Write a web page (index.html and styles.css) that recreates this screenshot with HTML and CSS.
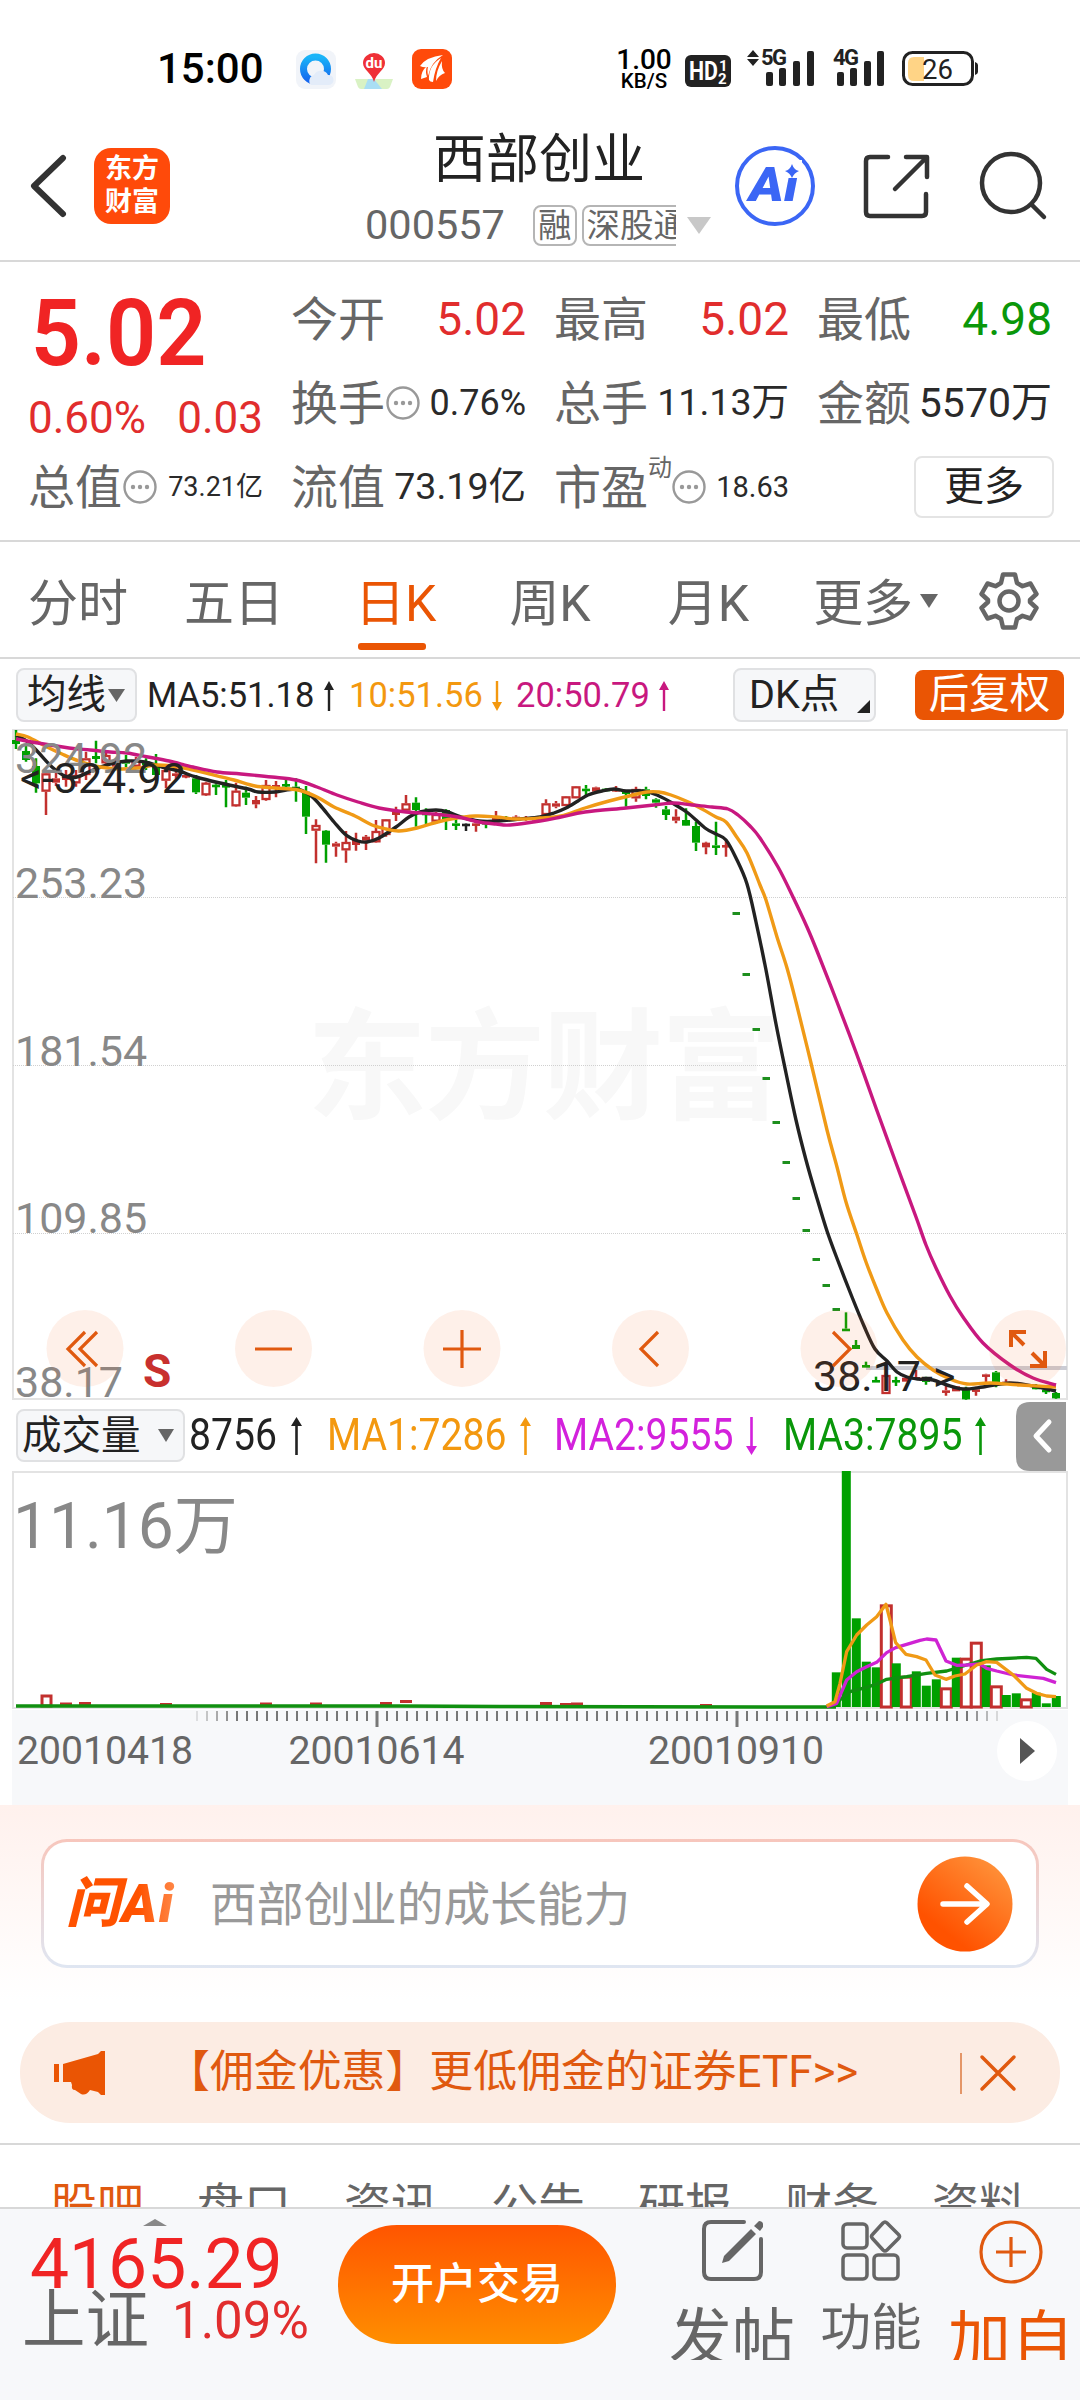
FILE: index.html
```html
<!DOCTYPE html>
<html lang="zh-CN">
<head>
<meta charset="utf-8">
<title>西部创业 000557</title>
<link rel="stylesheet" href="styles.css">
</head>
<body>
<div class="status">
  <span class="clock">15:00</span>
  <svg class="app-icons" width="160" height="42" viewBox="294 48 160 42">
    <defs>
      <linearGradient id="qb" x1="0" y1="0" x2="0" y2="1"><stop offset="0" stop-color="#19b4f8"/><stop offset="1" stop-color="#1667ee"/></linearGradient>
    </defs>
    <rect x="296" y="50" width="40" height="39" rx="9" fill="#f1f4f9"/>
    <circle cx="315.500" cy="69" r="12" fill="none" stroke="url(#qb)" stroke-width="7"/>
    <path d="M311 85a6 6 0 0 1 3-10a8 8 0 0 1 14 0a5 5 0 0 1 1 10z" fill="#e3ecf9"/>
    <path d="M355 79h38l-3 8q-1 2-3 2h-26q-2 0-3-2z" fill="#d9f2c4"/>
    <path d="M368 79l6 0 8 10h-18z" fill="#a9def4"/>
    <path d="M374 82c-2-9-11-12-11-19a11 10 0 0 1 22 0c0 7-9 10-11 19z" fill="#ef3037"/>
    <text x="374" y="68" text-anchor="middle" class="du">du</text>
    <rect x="412" y="49" width="40" height="40" rx="9" fill="#ff4a0a"/>
    <g fill="#fff"><path d="M420 66q6-9 23-11q-12 7-15 21q-1-6 0-9q-4 1-8-1z"/><path d="M421 79q0-8 6-13q-2 6 0 11z"/><path d="M429 80q-1-14 12-22q-6 10-8 24q-3 0-4-2z"/><path d="M436 81q0-10 6-20q-1 8 3 12q-6 2-9 8z"/></g>
  </svg>
  <span class="speed"><b>1.00</b><i>KB/S</i></span>
  <svg class="signals" width="296" height="42" viewBox="684 48 296 42">
    <rect x="685" y="55" width="46" height="32" rx="6" fill="#222"/>
    <text x="689" y="80" class="hd" textLength="29" lengthAdjust="spacingAndGlyphs">HD</text>
    <text x="719" y="71" class="hd-n">1</text>
    <text x="718" y="84" class="hd-n">2</text>
    <path d="M753 50l6 7h-12zM753 66l6-7h-12z" fill="#222"/>
    <text x="761" y="65" class="net">5G</text>
    <g fill="#222"><rect x="766" y="72" width="7" height="14" rx="2"/><rect x="779" y="68" width="7" height="18" rx="2"/><rect x="793" y="61" width="7" height="25" rx="2"/><rect x="807" y="51" width="7" height="35" rx="2"/></g>
    <text x="833" y="65" class="net">4G</text>
    <g fill="#222"><rect x="837" y="72" width="7" height="14" rx="2"/><rect x="850" y="68" width="7" height="18" rx="2"/><rect x="864" y="61" width="7" height="25" rx="2"/><rect x="877" y="51" width="7" height="35" rx="2"/></g>
    <rect x="903.500" y="52.500" width="69" height="32" rx="9" fill="#fff" stroke="#222" stroke-width="3"/>
    <path d="M914 57h10v24h-10q-6 0-6-6v-12q0-6 6-6z" fill="#ffd486"/>
    <path d="M975 62q3 1 3 3v7q0 2-3 3z" fill="#222"/>
    <text x="922" y="78.500" class="bat">26</text>
  </svg>
</div>

<header class="head">
  <svg class="back" width="40" height="64" viewBox="29 154 40 64"><path d="M63 158L34 186L63 214" fill="none" stroke="#333" stroke-width="6" stroke-linecap="round" stroke-linejoin="round"/></svg>
  <div class="logo"><span>东方</span><span>财富</span></div>
  <div class="title">
    <h1>西部创业</h1>
    <div class="sub"><span class="code">000557</span><span class="tag">融</span><span class="tag-clip"><span class="tag">深股通</span></span><svg width="24" height="17" viewBox="0 0 24 17"><path d="M0 0h24L12 17z" fill="#c8c8c8"/></svg></div>
  </div>
  <svg class="ai" width="84" height="84" viewBox="733 144 84 84">
    <circle cx="775" cy="186" r="38" fill="#fff" stroke="#3b66f5" stroke-width="4"/>
    <text x="749" y="201" class="ai-text" textLength="49" lengthAdjust="spacingAndGlyphs">Ai</text>
    <rect x="784" y="160" width="18" height="18" fill="#fff"/>
    <path d="M792 164q2 6 7 7q-5 2-7 7q-2-5-7-7q5-1 7-7z" fill="#3b66f5"/>
  </svg>
  <svg class="share" width="72" height="72" viewBox="860 150 72 72"><g fill="none" stroke="#333" stroke-width="4.500" stroke-linecap="round" stroke-linejoin="round"><path d="M888 157h-18q-4 0-4 4v51q0 4 4 4h52q4 0 4-4v-18"/><path d="M906 157h21v20M926 158L895 189"/></g></svg>
  <svg class="search" width="76" height="76" viewBox="976 148 76 76"><g fill="none" stroke="#333" stroke-width="4.500" stroke-linecap="round"><circle cx="1011" cy="183" r="29"/><path d="M1032 205l12 12"/></g></svg>
</header>

<section class="quote">
  <div class="price"><strong>5.02</strong><div class="chg"><span>0.60%</span><span>0.03</span></div></div>
  <div class="cell"><label>今开</label><b class="up v46">5.02</b></div>
  <div class="cell"><label>最高</label><b class="up v46">5.02</b></div>
  <div class="cell"><label>最低</label><b class="down v46">4.98</b></div>
  <div class="cell"><label>换手</label><svg class="dots" viewBox="0 0 34 34"><use href="#more-dots"/></svg><b class="v36">0.76%</b></div>
  <div class="cell"><label>总手</label><b class="v37">11.13万</b></div>
  <div class="cell"><label>金额</label><b class="v40">5570万</b></div>
  <div class="cell"><label>总值</label><svg class="dots" viewBox="0 0 34 34"><use href="#more-dots"/></svg><b class="v27">73.21亿</b></div>
  <div class="cell"><label>流值</label><b class="v37">73.19亿</b></div>
  <div class="cell"><label>市盈</label><sup>动</sup><svg class="dots" viewBox="0 0 34 34"><g id="more-dots"><circle cx="17" cy="17" r="15.500" fill="none" stroke="#999" stroke-width="2.400"/><circle cx="10" cy="17" r="2.200" fill="#999"/><circle cx="17" cy="17" r="2.200" fill="#999"/><circle cx="24" cy="17" r="2.200" fill="#999"/></g></svg><b class="v29">18.63</b></div>
  <div class="cell"><button class="more">更多</button></div>
</section>

<nav class="tabs">
  <span>分时</span><span>五日</span><span class="on">日K</span><span>周K</span><span>月K</span><span>更多</span>
  <svg class="tri" width="18" height="14" viewBox="0 0 18 14"><path d="M0 0h18L9 14z" fill="#666"/></svg>
  <svg class="gear" width="64" height="64" viewBox="-32 -32 64 64"><g fill="none" stroke="#666" stroke-width="4.500" stroke-linejoin="round"><path d="M-6-26.500h12l2 8.500l5.500 3.200l8-2.700l6 10.500l-6.500 6v2l6.500 6l-6 10.500l-8-2.700l-5.500 3.200l-2 8.500h-12l-2-8.500l-5.500-3.200l-8 2.700l-6-10.500l6.500-6v-2l-6.500-6l6-10.500l8 2.700l5.500-3.200z"/><circle r="9.500"/></g></svg>
</nav>

<div class="ind">
  <span class="pill"><span>均线</span><svg width="17" height="13" viewBox="0 0 17 13"><path d="M0 0h17L8.500 13z" fill="#666"/></svg></span>
  <span class="ma m1">MA5:51.18</span><svg class="arr" width="10" height="30" viewBox="0 0 10 30"><path d="M5 0l5 9h-3.800v21h-2.400v-21h-3.800z" fill="#222"/></svg>
  <span class="ma m2">10:51.56</span><svg class="arr" width="10" height="30" viewBox="0 0 10 30"><path d="M5 30l5-9h-3.800v-21h-2.400v21h-3.800z" fill="#f3980f"/></svg>
  <span class="ma m3">20:50.79</span><svg class="arr" width="10" height="30" viewBox="0 0 10 30"><path d="M5 0l5 9h-3.800v21h-2.400v-21h-3.800z" fill="#c8187f"/></svg>
  <span class="pill dk"><span>DK点</span><svg width="13" height="13" viewBox="0 0 13 13"><path d="M13 0v13h-13z" fill="#222"/></svg></span>
  <span class="adj">后复权</span>
</div>

<svg class="kline" id="kline" width="1080" height="680" viewBox="0 720 1080 680"></svg>

<div class="vol-head">
  <span class="pill"><span>成交量</span><svg width="16" height="13" viewBox="0 0 16 13"><path d="M0 0h16L8 13z" fill="#666"/></svg></span>
  <span class="vm k0"><i>8756</i></span><svg class="arr" width="11" height="38" viewBox="0 0 11 38"><path d="M5.500 0l5.500 9h-4.200v29h-2.600v-29h-4.200z" fill="#222"/></svg>
  <span class="vm k1"><i>MA1:7286</i></span><svg class="arr" width="11" height="38" viewBox="0 0 11 38"><path d="M5.500 0l5.500 9h-4.200v29h-2.600v-29h-4.200z" fill="#f3980f"/></svg>
  <span class="vm k2"><i>MA2:9555</i></span><svg class="arr" width="11" height="38" viewBox="0 0 11 38"><path d="M5.500 38l5.500-9h-4.200v-29h-2.600v29h-4.200z" fill="#d321dc"/></svg>
  <span class="vm k3"><i>MA3:7895</i></span><svg class="arr" width="11" height="38" viewBox="0 0 11 38"><path d="M5.500 0l5.500 9h-4.200v29h-2.600v-29h-4.200z" fill="#0a970a"/></svg>
  <svg class="fold" width="50" height="69" viewBox="0 0 50 69"><path d="M50 0H14Q0 0 0 14V55Q0 69 14 69H50z" fill="#999"/><path d="M33 20L20 34L33 48" fill="none" stroke="#fff" stroke-width="5" stroke-linecap="round" stroke-linejoin="round"/></svg>
</div>

<svg class="volume" id="volume" width="1080" height="239" viewBox="0 1471 1080 239"></svg>

<div class="axis">
  <svg class="ticks" id="ticks" width="1056" height="19" viewBox="12 1710 1056 19"></svg>
  <div class="dates"><span>20010418</span><span>20010614</span><span>20010910</span></div>
  <svg class="play" width="60" height="60" viewBox="0 0 60 60"><circle cx="30" cy="30" r="30" fill="#fff"/><path d="M23 17l15 13l-15 13z" fill="#555"/></svg>
</div>

<section class="ask">
  <div class="ask-box">
    <span class="ask-logo">问Ai</span>
    <span class="ask-text">西部创业的成长能力</span>
    <svg width="96" height="96" viewBox="0 0 96 96"><defs><linearGradient id="go" x1="0.850" y1="0.100" x2="0.300" y2="0.800"><stop offset="0" stop-color="#ff9038"/><stop offset="1" stop-color="#ff5200"/></linearGradient></defs><circle cx="48" cy="48" r="47.500" fill="url(#go)"/><path d="M26 48h43M50 30l20 18l-20 18" fill="none" stroke="#fff" stroke-width="5.500" stroke-linecap="round" stroke-linejoin="round"/></svg>
  </div>
</section>

<section class="promo">
  <svg class="horn" width="52" height="46" viewBox="54 2050 52 46"><path d="M54 2064h5v18h-5zM63 2064l35-10l3-3h4v44h-4l-3-3l-8-2q-4 6-9 4l-6-4q-4 0-3-5l-1-3h-8z" fill="#ea5504"/></svg>
  <span>【佣金优惠】更低佣金的证券ETF&gt;&gt;</span>
  <svg class="close" width="60" height="44" viewBox="960 2050 60 44"><path d="M961 2052v41" stroke="#dd7a3f" stroke-width="1.500"/><path d="M982 2056l32 32M1014 2056l-32 32" stroke="#e0590f" stroke-width="3.500" stroke-linecap="round"/></svg>
</section>

<nav class="sections"><span class="on">股吧</span><span>盘口</span><span>资讯</span><span>公告</span><span>研报</span><span>财务</span><span>资料</span></nav>

<footer class="bar">
  <div class="index">
    <svg width="24" height="7" viewBox="0 0 24 7"><path d="M12 0l12 7h-24z" fill="#888"/></svg>
    <strong>4165.29</strong>
    <div><span>上证</span><em>1.09%</em></div>
  </div>
  <button class="trade">开户交易</button>
  <div class="act post">
    <svg width="62" height="62" viewBox="701 2221 62 62"><g fill="none" stroke="#666" stroke-width="4" stroke-linecap="round"><path d="M744 2223h-33q-7 0-7 7v43q0 7 7 7h43q7 0 7-7v-33"/></g><path d="M751 2230l5 5l-27 27l-7 2l2-7zM754 2227l5-5q5 0 4 6l-3 4z" fill="#666"/></svg>
    <span>发帖</span>
  </div>
  <div class="act func">
    <svg width="62" height="62" viewBox="841 2220 62 62"><g fill="none" stroke="#666" stroke-width="3.500" stroke-linejoin="round"><rect x="844" y="2224" width="24" height="24" rx="4"/><rect x="844" y="2255" width="24" height="24" rx="4"/><rect x="875" y="2255" width="24" height="24" rx="4"/><path d="M884 2223q2-2 4 0l11.500 11.500q2 2 0 4l-11.500 11.500q-2 2-4 0l-10.500-11.500q-2-2 0-4z"/></g></svg>
    <span>功能</span>
  </div>
  <div class="act add">
    <svg width="64" height="64" viewBox="0 0 64 64"><g fill="none" stroke="#e0590f" stroke-width="3.200"><circle cx="32" cy="32" r="30"/><path d="M17 32h30M32 17v30"/></g></svg>
    <span>加自</span>
  </div>
</footer>
<script src="chart.js"></script>
</body>
</html>
```
FILE: styles.css
```css
* { box-sizing: border-box; }
body {
  margin: 0; width: 1080px; height: 2400px; overflow: hidden; background: #fff; color: #222;
  font-family: Roboto, "Noto Sans CJK SC", sans-serif; line-height: 1;
  display: flex; flex-direction: column;
}
body > * { flex: none; }
svg { display: block; flex: none; }
b, strong, em, i, h1 { font-weight: 400; font-style: normal; }
button { font: inherit; padding: 0; border: 0; }
span { white-space: nowrap; }

.status { height: 124px; padding: 48px 0 0 157px; display: flex; align-items: flex-start; color: #000; }
.clock { width: 137px; font-size: 42px; line-height: 42px; font-weight: 500; }
.app-icons { overflow: visible; }
.du { font: 700 15px Roboto, sans-serif; fill: #fff; }
.speed { margin-left: 153px; width: 77px; padding-right: 3px; display: flex; flex-direction: column; align-items: center; }
.speed b { font-size: 28px; line-height: 24px; font-weight: 500; }
.speed i { font-size: 20.500px; line-height: 19px; font-weight: 500; }
.hd { font: 700 26px Roboto, sans-serif; fill: #fff; }
.hd-n { font: 700 15px Roboto, sans-serif; fill: #fff; }
.net { font: 700 22px Roboto, sans-serif; fill: #222; letter-spacing: -1.500px; }
.bat { font: 400 27.500px Roboto, sans-serif; fill: #222; }

.head { height: 138px; border-bottom: 2px solid #d8d8d8; display: flex; }
.back { margin: 30px 0 0 29px; }
.logo {
  margin: 24px 0 0 25px; width: 76px; height: 76px; border-radius: 17px; background: #ff4a0a; color: #fff;
  display: flex; flex-direction: column; align-items: center; justify-content: center; font-size: 27px; line-height: 33px; font-weight: 700;
}
.title { margin-left: 195px; width: 351px; }
.title h1 { margin: 10px 0 0 68px; font-size: 53px; line-height: 52px; }
.sub { display: flex; margin-top: 18px; height: 42px; align-items: center; color: #666; }
.code { font-size: 41.500px; width: 168px; }
.tag { display: inline-block; height: 41px; line-height: 38px; font-size: 33.500px; border: 2px solid #b5b5b5; border-radius: 8px; padding: 0 3px; margin-right: 5px; }
.tag-clip { width: 94px; height: 41px; overflow: hidden; margin-right: 11px; }
.ai { margin: 20px 0 0 17px; }
.ai-text { font: italic 900 48px Roboto, sans-serif; fill: #3b66f5; }
.share { margin: 26px 0 0 43px; }
.search { margin: 24px 0 0 44px; }

.quote { height: 280px; border-bottom: 2px solid #d8d8d8; padding: 15px 29px 0 28px; display: grid; grid-template: repeat(3, 84px) / repeat(4, 235px); column-gap: 28px; }
.price { grid-row: span 2; color: #f02424; }
.price strong { display: block; font-size: 93px; line-height: 114px; font-weight: 600; padding-left: 3px; transform: scaleX(.945); transform-origin: 0 50%; }
.chg { display: flex; justify-content: space-between; font-size: 44px; line-height: 54px; color: #e12d2d; }
.cell { display: flex; align-items: center; height: 84px; color: #666; }
.cell label { font-size: 47px; }
.cell b { margin-left: auto; color: #2a2a2a; white-space: nowrap; }
.cell .up { color: #e12d2d; }
.cell .down { color: #0a970a; }
.v46 { font-size: 46px; } .v40 { font-size: 41px; } .v37 { font-size: 37.500px; } .v36 { font-size: 36px; } .v29 { font-size: 29px; } .v27 { font-size: 27px; }
.dots { width: 34px; height: 34px; margin-left: 1px; }
sup { font-size: 24px; align-self: flex-start; margin-top: 11px; margin-right: -1px; vertical-align: baseline; }
.more { margin-left: auto; margin-right: -2px; width: 140px; height: 62px; border: 2px solid #e4e4e4; border-radius: 8px; background: #fff; color: #222; font-size: 40px; }

.tabs { height: 117px; border-bottom: 2px solid #d8d8d8; padding: 12px 0 0 28px; display: flex; align-items: flex-start; font-size: 50px; line-height: 100px; color: #666; }
.tabs span { margin-right: 56px; position: relative; }
.tabs span:nth-of-type(2) { margin-right: 71px; }
.tabs span:nth-of-type(3) { margin-right: 73px; }
.tabs span:nth-of-type(4) { margin-right: 77px; }
.tabs span:nth-of-type(5) { margin-right: 64px; }
.tabs span:nth-of-type(6) { margin-right: 7px; }
.tabs .on { color: #ea5504; }
.tabs .on::after { content: ""; position: absolute; left: 3px; top: 89px; width: 68px; height: 7px; border-radius: 3px; background: #ea5504; }
.tri { margin-top: 40px; }
.gear { margin: 15px 0 0 39px; }

.ind { height: 61px; padding-left: 16px; display: flex; align-items: flex-start; }
.pill { height: 54px; margin-top: 9px; border: 2px solid #e0e1e3; border-radius: 8px; background: #f6f7f9; display: flex; align-items: center; font-size: 39.500px; padding-left: 9px; }
.ind .pill:first-child { width: 121px; }
.pill > span + svg { margin-left: 2px; }
.ma { margin: 11px 0 0; font-size: 34.500px; line-height: 50px; }
.m1 { margin-left: 10px; width: 177px; }
.m2 { margin-left: 15px; width: 143px; color: #f3980f; }
.m3 { margin-left: 14px; width: 143px; color: #c8187f; }
.arr { margin-top: 22px; }
.ind .dk { width: 143px; margin-left: 64px; padding-left: 14px; position: relative; }
.ind .dk svg { position: absolute; right: 4px; bottom: 7px; }
.adj { margin: 11px 0 0 39px; width: 149px; height: 50px; border-radius: 8px; background: #ea5504; color: #fff; font-size: 40.500px; line-height: 49px; text-align: center; }

.grid-text { font-size: 43px; fill: #888; }
.mark-text { font-size: 43px; fill: #222; }
.brand { font-size: 120px; font-weight: 700; fill: #f8f8f8; }
.sell { font-size: 46px; font-weight: 700; fill: #c8302e; }
.vol-max { font-size: 64px; fill: #888; }

.vol-head { height: 71px; padding-left: 16px; display: flex; }
.vol-head .pill { width: 169px; height: 53px; margin-top: 9px; padding-left: 4px; }
.vol-head .pill > span + svg { margin-left: 17px; }
.vm { height: 71px; line-height: 71px; font-size: 44px; }
.vm i { display: inline-block; transform: scaleX(.89); transform-origin: 0 50%; }
.k0 { width: 102px; margin-left: 4px; }
.k1 { width: 193px; margin-left: 25px; color: #f3980f; }
.k2 { width: 192px; margin-left: 23px; color: #d321dc; }
.k3 { width: 192px; margin-left: 26px; color: #0a970a; }
.vol-head .arr { margin-top: 17px; }
.fold { margin: 2px 0 0 30px; }

.axis { margin-left: 12px; width: 1056px; height: 95px; background: #f7f8fa; position: relative; }
.dates { display: grid; grid-template-columns: 186px 357px 362px; font-size: 39.200px; line-height: 42px; color: #666; padding: 1px 0 0 0; text-align: center; }
.play { position: absolute; right: 11px; top: 11px; }

.ask { height: 195px; background: linear-gradient(#fff1ed, #fff); padding: 34px 41px 0; }
.ask-box { height: 129px; border-radius: 26px; border: 3px solid transparent; display: flex; align-items: center; background: linear-gradient(#fff, #fff) padding-box, linear-gradient(#f7c6bc, #dfe6f2) border-box; padding: 0 23px 0 22px; }
.ask-logo { width: 144px; font-size: 54px; font-weight: 900; font-style: italic; letter-spacing: 1.500px; background: linear-gradient(90deg, #ff5200 50%, #ff9a60 85%); -webkit-background-clip: text; background-clip: text; color: transparent; line-height: 64px; }
.ask-text { flex: 1; font-size: 46.700px; color: #999; padding-top: 3px; }

.promo { margin: 22px 20px 0; height: 101px; border-radius: 50px; background: #fcece3; display: flex; align-items: center; color: #e0590f; font-size: 43.900px; }
.horn { margin-left: 34px; margin-right: 60px; }
.close { margin-left: auto; margin-right: 40px; }

.sections { margin-top: 20px; height: 64px; border-top: 2px solid #d8d8d8; overflow: hidden; display: grid; grid-template-columns: repeat(7, 147px); padding: 37px 0 0 50px; font-size: 47px; line-height: 48px; color: #666; }
.sections .on { color: #e0590f; }

.bar { height: 193px; border-top: 2px solid #d8d8d8; background: #f7f8fa; display: flex; }
.index { width: 338px; padding: 10px 0 0 22px; }
.index > svg { margin-left: 121px; }
.index strong { display: block; margin: 13px 0 0 8px; font-size: 69.500px; line-height: 52px; color: #f02424; }
.index div { display: flex; line-height: 60px; }
.index span { font-size: 63.500px; color: #666; width: 150px; }
.index em { font-size: 51px; color: #e12d2d; }
.trade { margin-top: 16px; width: 278px; height: 119px; border-radius: 59px; background: linear-gradient(#ff5500, #ff8e00); color: #fff; font-size: 43px; font-weight: 500; }
.act { height: 151px; overflow: hidden; padding-top: 11px; display: flex; flex-direction: column; align-items: center; color: #666; }
.post { margin-left: 53px; width: 126px; font-size: 63px; }
.post span, .add span { margin-top: 25px; }
.func { margin-left: 24px; width: 104px; font-size: 50.500px; }
.func span { margin-top: 21px; }
.add { margin-left: 25px; width: 126px; color: #ea5504; font-size: 63px; }
```
FILE: chart.js
```js
const RED = '#c2302e', GREEN = '#00a000', BLACK = '#222', ORANGE = '#f09a16', PINK = '#c8187f', PURPLE = '#cf23d3';
const X0 = 16, STEP = 10;

// Smooth path through the given points.
function curve(points) {
  let d = `M${points[0][0]} ${points[0][1]}`;
  for (let i = 0; i < points.length - 1; i++) {
    const p0 = points[i - 1] || points[i], p1 = points[i], p2 = points[i + 1], p3 = points[i + 2] || p2;
    d += `C${p1[0] + (p2[0] - p0[0]) / 6} ${p1[1] + (p2[1] - p0[1]) / 6} ${p2[0] - (p3[0] - p1[0]) / 6} ${p2[1] - (p3[1] - p1[1]) / 6} ${p2[0]} ${p2[1]}`;
  }
  return d;
}
function pairs(text) { return text.trim().split(/\s+/).map(p => p.split(',').map(Number)); }
function line(text, color, width) {
  return `<path d="${curve(pairs(text))}" fill="none" stroke="${color}" stroke-width="${width}"/>`;
}

// index, colour, high, body top, body bottom, low (thirds of a pixel below the 720 line)
const candles = `0g 30 60 72 87;1g 72 93 120 125;2g 115 138 190 218;3r 150 160 215 285;4r 158 175 188 198;5r 150 165 180 200;
6r 150 165 190 200;7r 95 115 165 180;8g 62 108 117 130;9r 95 105 130 140;10r 120 130 140 150;11g 105 123 131 142;12r 110 120 140 145;13g 115 125 135 150;
14g 102 140 165 180;15r 145 150 182 205;16r 140 160 168 178;17r 160 165 170 175;18g 165 175 217 222;19r 185 188 226 228;
20g 190 194 200 225;21g 180 195 200 262;22r 188 212 259 260;23g 200 218 233 255;24r 228 240 253 265;25r 180 195 240 242;
26r 183 195 202 232;27g 180 192 197 207;28g 175 200 205 245;29g 198 215 290 342;30r 298 315 332 430;31g 330 332 374 428;
32r 365 370 380 410;33r 333 366 391 428;34r 338 360 375 392;35r 345 350 362 390;36r 300 333 367 368;37r 297 298 345 350;
38r 260 275 285 303;39r 225 250 272 273;40g 232 248 270 320;41g 265 278 283 312;42r 275 282 305 312;43g 268 270 300 330;
44g 298 310 316 330;45k 310 311 316 333;46r 300 310 316 335;47g 300 306 310 325;48r 273 290 305 306;49g 288 293 298 300;
50r 286 290 300 302;51r 288 292 297 302;52r 288 294 300 306;53r 238 250 285 290;54r 243 250 260 265;55r 228 229 258 258;
56r 198 199 235 235;57g 195 206 210 225;58r 200 202 215 215;59g 204 206 210 212;60r 198 207 213 215;61g 212 213 222 260;
62r 200 207 235 245;63g 200 208 228 238;64g 235 238 248 263;65g 258 268 285 300;66r 268 290 302 310;67g 265 300 317 318;
68g 305 318 368 393;69r 365 368 382 403;70g 305 376 381 405;71r 360 375 381 410;83g 1777 1826 1832 1832;84g 1860 1875 1887 1887;
85g 1925 1935 1943 1943;86g 1970 1980 1985 1985;87r 1960 1965 2022 2022;88g 1970 1980 1986 1998;89r 1970 1973 1985 1985;
90r 1950 1971 1975 1977;91g 1970 1978 1985 1994;93r 1998 2011 2017 2027;94r 1998 1999 2014 2014;95g 2000 2008 2038 2040;
96r 2000 2008 2014 2027;97r 1961 1963 1966 1986;98g 1953 1957 1986 2002;99r 1978 1985 1990 1992;102g 1992 2000 2006 2008;
103g 2000 2009 2015 2022;104g 2016 2019 2035 2037`.split(';').map(s => s.trim().match(/^(\d+)(\w) (\S+) (\S+) (\S+) (\S+)$/).slice(1));

let k = '<text x="307" y="1110" class="brand" textLength="474">东方财富</text>';
k += '<rect x="13" y="730" width="1054" height="669" fill="none" stroke="#e3e3e3" stroke-width="2"/>';
for (const y of [897.5, 1065.5, 1233.5]) k += `<path d="M13 ${y}H1067" stroke="#d0d0d0" stroke-dasharray="1 1"/>`;
k += '<path d="M866 1368H1067" stroke="#cbccd4" stroke-width="4"/>';
for (const c of candles) {
  const x = X0 + STEP * +c[0], color = { r: RED, g: GREEN, k: BLACK }[c[1]];
  const [hi, top, bottom, lo] = c.slice(2).map(v => 720 + v / 3);
  const h = Math.max(bottom - top, 2.6);
  k += `<path d="M${x} ${hi}V${top}M${x} ${bottom}V${lo}" stroke="${color}" stroke-width="2.500"/>`;
  if (c[1] === 'r' && h > 5) k += `<rect x="${x - 3.5}" y="${top + 1}" width="7" height="${h - 2}" fill="#fff" stroke="${color}" stroke-width="2.300"/>`;
  else k += `<rect x="${x - 4}" y="${top}" width="8" height="${h}" fill="${color}"/>`;
}
[913, 974, 1029, 1078, 1122, 1162, 1198, 1230, 1259, 1285, 1309].forEach((y, i) => {
  k += `<rect x="${732.5 + i * 10}" y="${y - 1}" width="7.500" height="3" fill="#1d8f1d"/>`;
});
k += line(`16,735 28,742 38,752 52,767 65,776 77,777 93,770 110,764 127,761 145,762 162,767 179,771 196,777 220,783 248,789 258,792 275,792
296,789 310,795 320,805 334,822 346,835 358,841 367,842 379,838 396,827 409,817 420,812 436,810 448,812 461,817 479,821 499,821 520,819 540,817
554,813 566,808 578,801 588,795 602,791 614,789 626,791 643,791 657,795 674,804 688,813 705,828 716,834 726,840 736,858 747,884 756,922
766,970 776,1024 786,1073 796,1120 806,1160 816,1195 827,1231 838,1261 852,1297 864,1326 875,1349 887,1361 897,1372 907,1377 918,1379 933,1380
947,1385 963,1389 983,1387 1010,1383 1033,1386 1056,1391`, BLACK, 3.4);
k += line(`16,734 28,737 45,746 62,754 79,761 100,767 120,769 138,768 155,765 172,766 189,769 210,774 234,780 255,786 275,788 298,790 317,797
334,807 355,816 372,825 386,829 399,831 417,828 434,823 451,819 475,816 496,817 516,819 540,818 561,816 585,808 609,801 633,795 647,792 659,792
671,795 686,801 702,809 716,817 726,822 736,836 747,853 760,885 766,900 777,937 787,968 796,1002 811,1063 827,1130 837,1167 846,1202 857,1235
866,1262 877,1290 887,1313 903,1340 917,1357 933,1370 950,1379 967,1384 990,1383 1020,1385 1056,1387`, ORANGE, 3.4);
k += line(`16,739 38,743 69,748 90,750 110,752 127,753 148,757 169,761 193,767 217,772 241,774 272,777 296,780 317,787 337,795 358,802 379,808
406,812 434,814 458,817 479,822 496,824 510,825 540,821 561,817 585,812 626,808 654,805 674,803 692,805 712,807 728,809 738,815 750,826 760,838
778,867 793,897 807,927 817,951 837,1002 857,1055 876,1108 896,1163 916,1217 926,1245 936,1268 950,1296 963,1317 983,1343 1010,1365 1033,1378
1056,1385`, PINK, 3.4);
[['324.92', 773], ['253.23', 898], ['181.54', 1066], ['109.85', 1233], ['38.17', 1397]].forEach(([t, y]) => {
  k += `<text x="15" y="${y}" class="grid-text">${t}</text>`;
});
k += '<text x="20" y="793" class="mark-text">&lt;-324.92</text><text x="813" y="1391" class="mark-text">38.17-&gt;</text>';
k += '<text x="143" y="1387" class="sell">S</text>';
for (const x of [85, 273.5, 462, 650.5, 839, 1027.5]) k += `<circle cx="${x}" cy="1348.500" r="38.500" fill="#f96a2a" fill-opacity=".1"/>`;
k += `<g fill="none" stroke="#e0590f" stroke-width="3.200">
<path d="M85 1332L68 1349L85 1366M97 1332L80 1349L97 1366M255 1349H292M443 1349H481M462 1330V1368M658 1332L641 1349L658 1366M833 1332L850 1349L833 1366"/>
<path d="M1011 1347V1332H1026M1012 1333L1024 1345M1045 1351V1366H1030M1044 1365L1032 1353" stroke-width="4"/></g>`;
document.getElementById('kline').innerHTML = k;

// index, colour, top (thirds of a pixel below the 1560 line)
const bars = '85g337 86g-267 87g175 88g305 89g322 90r133 91g310 92r347 93g334 94g377 95g358 96r382 97g293 98r293 99r245 100g316 101r376 102g405 103g400 104r415 105g398 106g430 107g408';
let v = '<rect x="13" y="1472" width="1054" height="236" fill="none" stroke="#e3e3e3" stroke-width="2"/>';
for (const b of bars.split(' ')) {
  const [, i, c, t] = b.match(/(\d+)(\w)(-?\d+)/), x = 836.3 + (i - 85) * STEP, y = 1560 + t / 3;
  v += c === 'g' ? `<rect x="${x - 4.5}" y="${y}" width="9" height="${1707 - y}" fill="${GREEN}"/>`
    : `<rect x="${x - 5}" y="${y + 1.5}" width="10" height="${1705.5 - y}" fill="#fff" stroke="${RED}" stroke-width="3"/>`;
}
v += `<rect x="42" y="1696" width="9" height="10" fill="#fff" stroke="${RED}" stroke-width="3"/>`;
for (const [x, y] of [[66, 1702.5], [85, 1702], [166, 1703], [266, 1702.5], [316, 1702.5], [386, 1702], [406, 1700], [546, 1702], [566, 1703], [577, 1702.5], [706, 1704]]) v += `<rect x="${x - 6}" y="${y}" width="12" height="3" fill="${RED}"/>`;
v += '<path d="M16 1706H400L500 1706.500L836 1707" fill="none" stroke="#109010" stroke-width="3.500"/>';
const vol = t => pairs(t).map(([x, y]) => `${780 + x / 3},${1560 + y / 3}`).join(' ');
v += `<g fill="none" stroke-width="3.300" stroke-linejoin="round">
<polyline stroke="#108f10" points="${vol('140,440 165,434 185,415 210,395 260,382 290,372 320,358 380,350 440,340 500,333 550,318 600,303 650,297 740,292 768,295 800,328 828,343')}"/>
<polyline stroke="${PURPLE}" points="${vol('140,440 170,430 200,360 230,335 260,320 290,307 320,278 347,263 380,253 420,241 440,237 468,240 498,303 530,316 560,315 600,312 620,325 650,333 700,345 790,355 828,368')}"/>
<polyline stroke="${ORANGE}" points="${vol('140,438 165,425 180,370 200,275 230,225 260,195 290,170 318,133 330,180 347,248 378,283 410,290 438,300 465,345 498,358 525,348 555,342 590,315 620,305 650,307 700,345 740,385 770,400 800,408 828,410')}"/></g>`;
v += '<text x="13" y="1548" class="vol-max">11.16万</text>';
document.getElementById('volume').innerHTML = v;

let t = '';
for (let x = 197; x <= 997; x += 10) {
  const o = Math.min(1, (x - 187) / 50, (1007 - x) / 40), long = x === 377 || x === 737;
  t += `<rect x="${x - (long ? 1.5 : 1)}" y="1711" width="${long ? 3 : 2}" height="${long ? 16 : 10}" fill="#777" opacity="${o}"/>`;
}
document.getElementById('ticks').innerHTML = t;
```
